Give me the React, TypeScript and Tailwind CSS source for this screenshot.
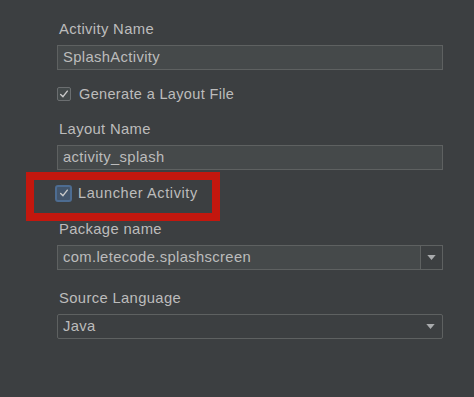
import React from "react";

const labelClass = "h-5 leading-5 pl-[2px] text-[14.8px] tracking-[0.35px] text-[#bcbcbc]";
const fieldClass =
  "flex h-[25px] w-[386px] items-center border border-[#5e6161] bg-[#45494a] px-[5px] text-[14.8px] tracking-[0.35px] text-[#bcbcbc]";

function Check({ focused = false }: { focused?: boolean }) {
  return (
    <span
      className={
        focused
          ? "flex size-[17px] items-center justify-center rounded-[3px] border-[2px] border-[#4d6c91] bg-[#43556b]"
          : "flex size-[14px] items-center justify-center rounded-[2px] border border-[#6b6e70] bg-[#43494a]"
      }
    >
      <svg viewBox="0 0 12 12" className="size-[10px]">
        <polyline
          points="2,6.5 4.8,9.2 10,2.6"
          fill="none"
          stroke="#c9c9c9"
          strokeWidth="1.7"
          strokeLinecap="round"
          strokeLinejoin="round"
        />
      </svg>
    </span>
  );
}

function Arrow() {
  return (
    <svg viewBox="0 0 10 6" className="h-[5px] w-[9px]">
      <polygon points="0,0 10,0 5,6" fill="#a9abad" />
    </svg>
  );
}

export default function App() {
  return (
    <div
      className="h-[397px] w-[474px] overflow-hidden bg-[#3c3f41] pl-[57px] pt-[19px]"
      style={{ fontFamily: '"Liberation Sans", Arial, sans-serif' }}
    >
      <div className={labelClass}>Activity Name</div>
      <div className={`mt-[6px] ${fieldClass}`}>SplashActivity</div>

      <label className="mt-[14px] flex h-5 items-center gap-[8px] text-[14.5px] tracking-[0.35px] text-[#bcbcbc]">
        <Check />
        <span className="pt-[2px]">Generate a Layout File</span>
      </label>

      <div className={`mt-[15px] ${labelClass}`}>Layout Name</div>
      <div className={`mt-[6px] ${fieldClass}`}>activity_splash</div>

      <div className="relative mt-[13px] h-5">
        <label className="-ml-[2px] flex h-5 items-center gap-[6px] text-[14.5px] tracking-[0.6px] text-[#bcbcbc]">
          <Check focused />
          <span className="pt-[2px]">Launcher Activity</span>
        </label>
        <div className="pointer-events-none absolute -left-[31px] -top-[11px] h-[49px] w-[194px] border-[8px] border-[#c3170e]" />
      </div>

      <div className={`mt-[16px] ${labelClass}`}>Package name</div>
      <div className="mt-[6px] flex h-[25px] w-[386px] border border-[#5e6161] bg-[#45494a] text-[14.8px] tracking-[0.35px] text-[#bcbcbc]">
        <div className="flex flex-1 items-center px-[5px]">com.letecode.splashscreen</div>
        <div className="flex w-[22px] items-center justify-center border-l border-[#5e6161] bg-[#3c3f41]">
          <Arrow />
        </div>
      </div>

      <div className={`mt-[18px] ${labelClass}`}>Source Language</div>
      <div className="mt-[6px] flex h-[25px] w-[386px] items-center justify-between rounded-[2px] border border-[#5e6161] bg-[#3c3f41] pl-[5px] pr-[7px] text-[14.8px] tracking-[0.35px] text-[#bcbcbc]">
        <span>Java</span>
        <Arrow />
      </div>
    </div>
  );
}
